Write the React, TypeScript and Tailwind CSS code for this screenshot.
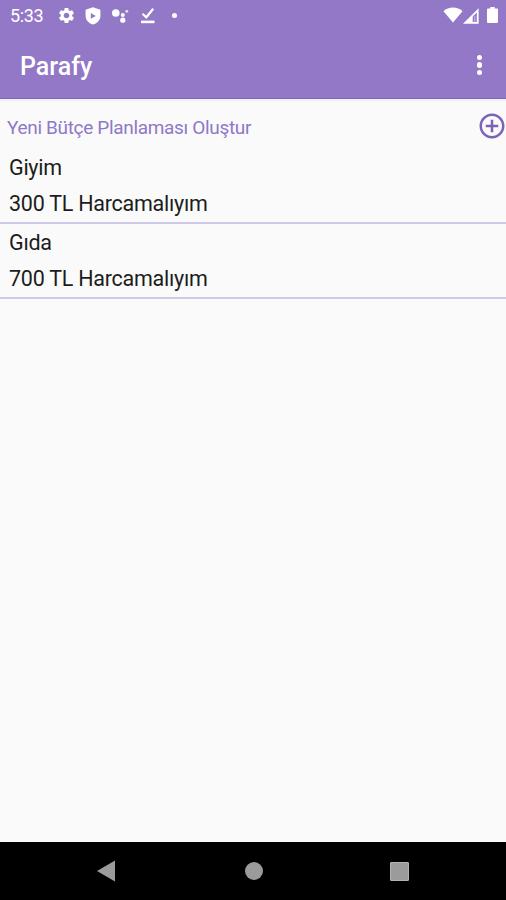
import { MdAddCircleOutline, MdSettings } from 'react-icons/md';

const budgets = [
  { id: 1, name: 'Giyim', amount: 300 },
  { id: 2, name: 'Gıda', amount: 700 },
];

function StatusBar() {
  return (
    <div className="flex h-8 items-center justify-between pl-[10px] pr-2 text-white">
      <div className="flex items-center">
        <span className="w-[47px] text-[18px] leading-8 tracking-[-0.4px]">5:33</span>
        <MdSettings className="mb-px h-[19px] w-[19px]" />
        {/* play protect shield */}
        <svg className="mb-px ml-[9px] h-[18px] w-4" viewBox="0 0 16 18">
          <path fill="currentColor" fillRule="evenodd" d="M8 0.3L15.4 2.8V9C15.4 13 12.5 16 8 17.6C3.5 16 0.6 13 0.6 9V2.8ZM5.8 6V11.8L10.8 8.9Z" />
        </svg>
        {/* assistant dots */}
        <svg className="mb-px ml-[10px] h-[18px] w-[18px]" viewBox="0 0 18 18" fill="currentColor">
          <circle cx="4.8" cy="6" r="3.8" />
          <circle cx="11.8" cy="8" r="2" />
          <circle cx="15.8" cy="4.3" r="1.4" opacity="0.8" />
          <circle cx="11.8" cy="13.2" r="2.6" />
        </svg>
        <svg className="ml-[11px] h-[18px] w-4" viewBox="0 0 16 18">
          <path d="M2.5 6.8L6.3 10.3L13.2 1.8" fill="none" stroke="currentColor" strokeWidth="2.2" />
          <path d="M1 13.6H14.5V16.2H1Z" fill="currentColor" />
        </svg>
        <div className="mb-px ml-[16px] h-[5px] w-[5px] rounded-full bg-white" />
      </div>
      <div className="flex items-center">
        <svg className="mb-[2px] h-4 w-[20px]" viewBox="0 0 20 16">
          <path fill="currentColor" d="M10 15.5L0.5 4.2C5.5 -0.8 14.5 -0.8 19.5 4.2Z" />
        </svg>
        <svg className="mb-px h-4 w-4" viewBox="0 0 16 16">
          <path fill="currentColor" fillRule="evenodd" d="M15.6 0.2V15.8H0ZM13.8 4.5L9.7 8.6V14H13.8Z" />
          <path d="M11.8 8V14" stroke="currentColor" strokeWidth="1" opacity="0.5" />
        </svg>
        <svg className="mb-[2px] ml-2 h-4 w-[11px]" viewBox="0 0 11 16">
          <path fill="currentColor" d="M3.3 0H7.7V1.5H10Q11 1.5 11 2.5V15Q11 16 10 16H1Q0 16 0 15V2.5Q0 1.5 1 1.5H3.3Z" />
        </svg>
      </div>
    </div>
  );
}

function NavigationBar() {
  return (
    <div className="flex h-[58px] items-center bg-black pl-[97px] text-[#9b9b9b]">
      <svg className="h-[22px] w-[18px]" viewBox="0 0 18 22">
        <path fill="currentColor" d="M0 11L18 0.5V21.5Z" />
      </svg>
      <div className="ml-[130px] h-[18px] w-[18px] rounded-full bg-[#9b9b9b]" />
      <div className="ml-[127px] h-[19px] w-[19px] rounded-[1px] border border-[#b3b3b3] bg-[#9b9b9b]" />
    </div>
  );
}

export default function App() {
  return (
    <div className="flex h-[900px] w-[506px] flex-col overflow-hidden bg-[#fafafa] font-[Roboto,sans-serif]">
      <header className="h-[99px] border-b border-[#8067b4] bg-[#9378c7]">
        <StatusBar />
        <div className="flex h-[66px] items-center justify-between pl-[20px] pr-[24px] text-white">
          <h1 className="pt-[3px] text-[25px] font-medium">Parafy</h1>
          <div className="flex flex-col gap-[2px]">
            <span className="h-[5.5px] w-[5.5px] rounded-full bg-white" />
            <span className="h-[5.5px] w-[5.5px] rounded-full bg-white" />
            <span className="h-[5.5px] w-[5.5px] rounded-full bg-white" />
          </div>
        </div>
      </header>

      <main className="flex-1">
        <div className="flex h-[50px] items-center justify-between border-t-2 border-[#f1eff7] pl-[7px] text-[#8f78c8]">
          <span className="pt-[7px] text-[19px] tracking-[-0.33px]">Yeni Bütçe Planlaması Oluştur</span>
          <MdAddCircleOutline className="-mr-px mt-px h-[30px] w-[30px] text-[#7c62b8]" />
        </div>
        <ul>
          {budgets.map((budget) => (
            <li key={budget.id} className="h-[75px] border-b-2 border-[#cfc9e8] pl-[9px] pt-px text-[21.5px] tracking-[-0.25px] text-[#1c1c1c]">
              <p className="h-9 leading-9">{budget.name}</p>
              <p className="h-9 leading-9">{budget.amount} TL Harcamalıyım</p>
            </li>
          ))}
        </ul>
      </main>

      <NavigationBar />
    </div>
  );
}
